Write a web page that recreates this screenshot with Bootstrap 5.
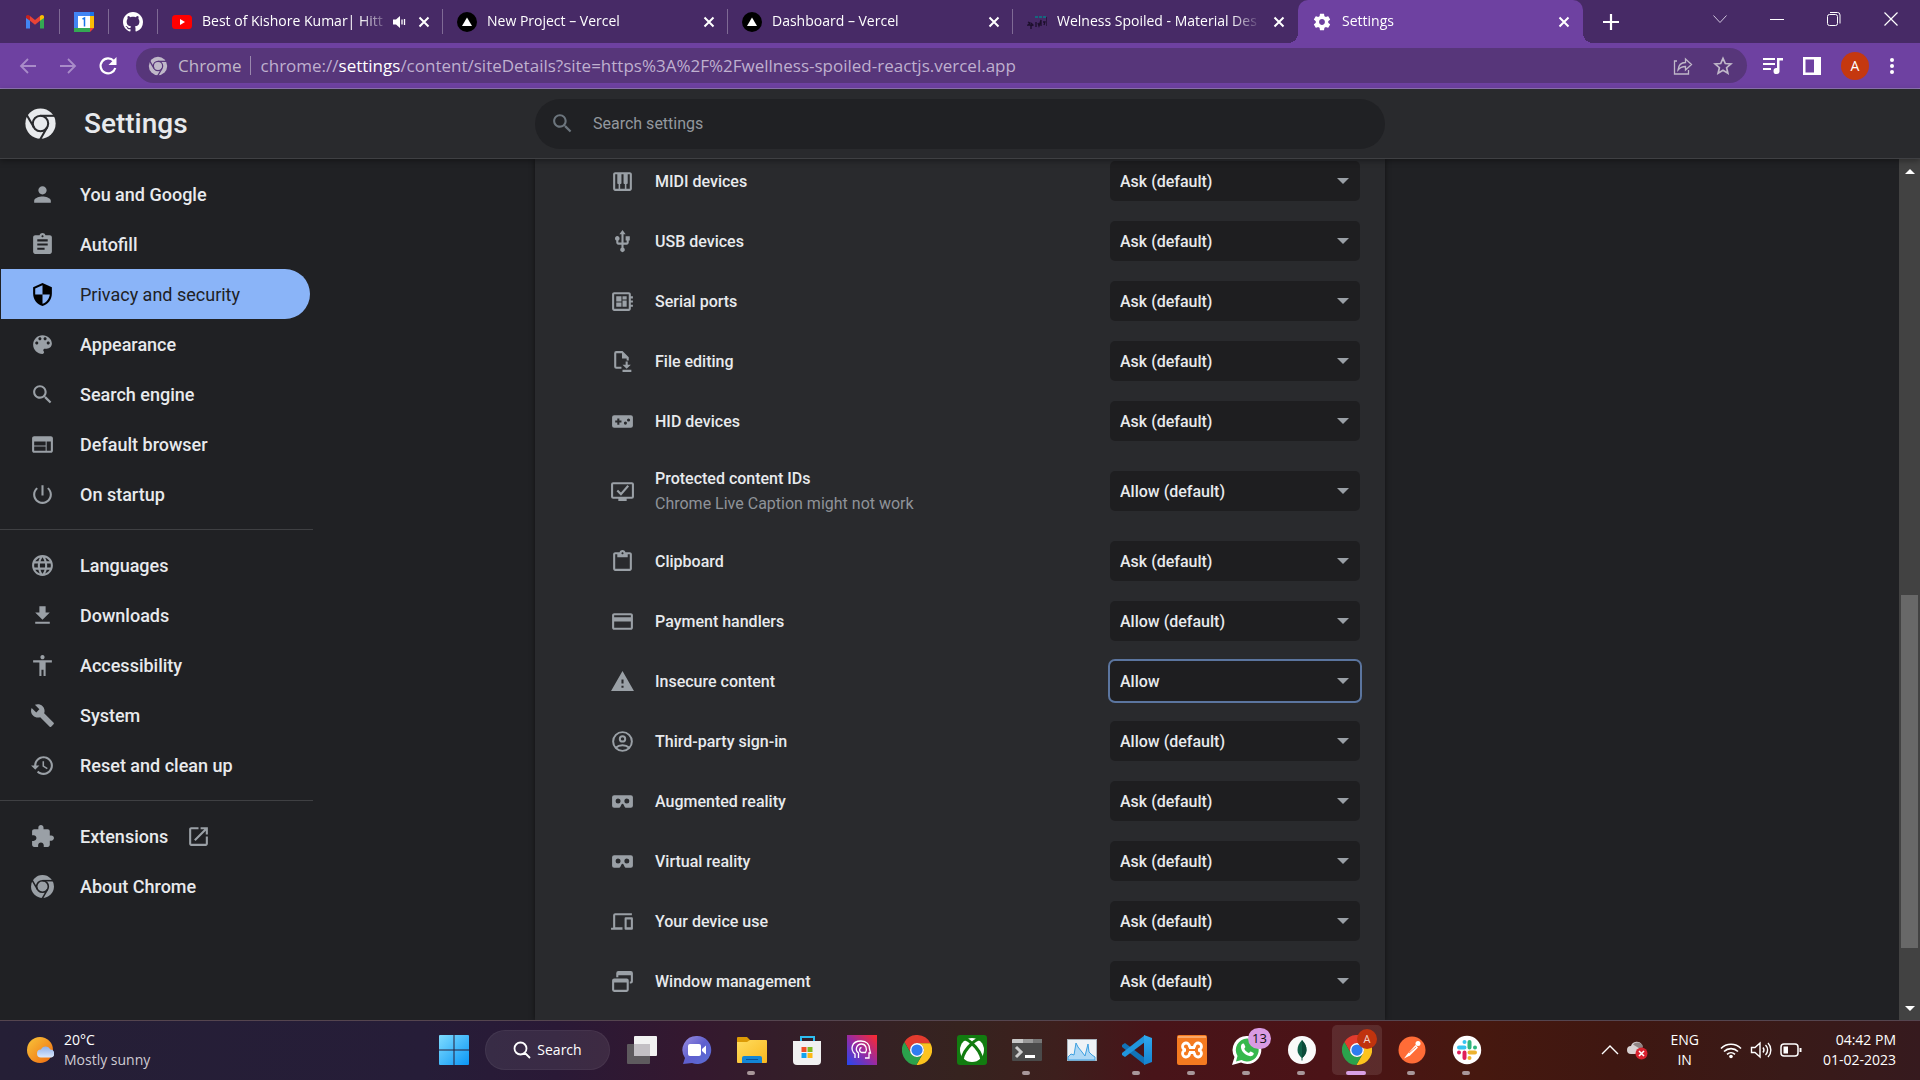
<!DOCTYPE html>
<html lang="en">
<head>
<meta charset="utf-8">
<meta name="viewport" content="width=device-width, initial-scale=1">
<title>Settings</title>
<link href="https://cdn.jsdelivr.net/npm/bootstrap@5.3.0/dist/css/bootstrap.min.css" rel="stylesheet">
<style>
  :root { --strip:#472a66; --bar:#6e41a1; --omni:#57367a; --page:#202124; --panel:#292a2d; --ink:#e8eaed; --dim:#9aa0a6; }
  body { font-family:Roboto,"Liberation Sans",sans-serif; background:var(--page); color:var(--ink); font-size:16px; }
  svg { display:block; flex:none; fill:currentColor; }
  .ui-font { font-family:"Open Sans","Noto Sans",sans-serif; }
  .btn { --bs-btn-padding-x:0; --bs-btn-padding-y:0; --bs-btn-border-width:0; --bs-btn-color:inherit; --bs-btn-hover-color:inherit; --bs-btn-active-color:inherit; }
  .i25 { width:25px; height:25px; }
  .i20 { width:20px; height:20px; }

  /* tab strip */
  .tab-strip { background:var(--strip); height:43px; padding-left:11px; color:#fff; font-size:14px; line-height:20px; }
  .tab-item { position:relative; flex:0 1 285px; padding-left:14px; height:43px; gap:10px; min-width:0; }
  .tab-item::after { content:""; width:1px; height:25px; background:#7f6a95; flex:none; }
  .tab-item.pinned { flex:0 0 49px; padding-left:14px; gap:14px; }
  .tab-title { color:#fff; flex:1 1 0; min-width:0; padding-bottom:2px; overflow:hidden; white-space:nowrap; text-decoration:none; -webkit-mask-image:linear-gradient(90deg,#000 calc(100% - 30px),transparent); mask-image:linear-gradient(90deg,#000 calc(100% - 30px),transparent); }
  .tab-item.audible .tab-title { margin-right:-8px; }
  .tab-item.active { background:var(--bar); border-radius:10px 10px 0 0; }
  .tab-item.active::after { background:none; }
  .tab-item.active::before { content:""; position:absolute; bottom:0; left:-10px; right:-10px; height:10px; background:radial-gradient(circle at 0 0,transparent 10px,var(--bar) 10px) left/10px 10px no-repeat,radial-gradient(circle at 100% 0,transparent 10px,var(--bar) 10px) right/10px 10px no-repeat; }
  .tab-item.before-active::after { background:none; }
  .window-btn { width:57px; }
  .window-group { padding:0 1px 6px 0; }

  /* toolbar */
  .tool-bar { background:var(--bar); height:46px; border-bottom:1px solid #9277b6; padding:0 15px; color:#fff; }
  .nav-arrow { width:40px; color:#a98cc9; }
  .nav-arrow.first { width:26px; margin-right:7px; }
  .omnibox { background:var(--omni); height:35px; border-radius:18px; color:#c0b8c9; padding:0 14px 0 12px; font-size:17px; line-height:24px; }
  .omni-label { margin:0 8px 0 10px; }
  .omni-sep { width:1px; height:19px; background:#9a88ad; margin-right:10px; }
  .url { color:#bfb0cf; white-space:nowrap; overflow:hidden; }
  .url b { color:#fff; font-weight:400; }
  .tool-gap { gap:20px; }
  .tool-end { padding-right:10px; }
  .avatar { width:28px; height:28px; background:#c5380f; border-radius:50%; font-size:14px; }

  /* settings header */
  .app-header { height:70px; background:var(--panel); border-bottom:1px solid #3f4043; position:relative; z-index:2; box-shadow:0 2px 6px rgba(0,0,0,.35); }
  .side-cell { flex:1 1 0; min-width:0; }
  .brand { gap:27px; }
  .app-title { font-size:28px; font-weight:500; line-height:32px; }
  .search-field { flex:0 1 850px; height:50px; border-radius:25px; background:var(--page); padding:0 15px; gap:18px; }
  .search-field input { background:none; border:0; outline:0; color:var(--ink); font-size:16px; padding:0; box-shadow:none; }
  .search-field input::placeholder { color:#93989e; }

  /* side menu */
  .side-menu { padding-top:10px; }
  .side-menu .nav-link { height:50px; width:310px; padding:0 0 0 30px; gap:25px; color:var(--ink); font-size:18px; font-weight:500; }
  .side-menu .nav-link svg { color:var(--dim); }
  .side-menu .nav-link.active { background:#8ab4f8; color:#202124; font-weight:400; border-radius:0 25px 25px 0; margin-left:1px; width:309px; padding-left:29px; }
  .side-menu .nav-link.active svg { color:#000; }
  .side-menu .trail { gap:18px; }
  .side-menu hr { width:313px; margin:10px 0; border-top:1px solid #3f4043; opacity:1; }

  /* permission list */
  .page-body { flex:1 1 0; min-height:0; }
  .panel-col { flex:0 1 850px; background:var(--panel); box-shadow:0 0 5px rgba(0,0,0,.5); }
  .perm-list { margin-top:-8px; }
  .perm-row { height:60px; padding:0 25px 0 75px; gap:20px; font-weight:500; }
  .perm-row.tall { height:80px; }
  .perm-row > svg { color:var(--dim); }
  .perm-row label { line-height:25px; }
  .perm-row .sub { display:block; font-weight:400; color:#8f9399; }
  .perm-row .form-select { width:250px; height:40px; background-color:#1e1e20; border:0; border-radius:5px; color:var(--ink); font-size:16px; font-weight:500; line-height:24px; padding:2px 30px 0 10px; background-size:12px 6px; background-position:right 11px center;
    background-image:url("data:image/svg+xml,%3csvg xmlns='http://www.w3.org/2000/svg' viewBox='0 0 12 6'%3e%3cpath fill='%239aa0a6' d='M0 0h12L6 6z'/%3e%3c/svg%3e"); }
  .perm-row .form-select.focused { box-shadow:0 0 0 2px #5b759f; }

  /* scroll bar */
  .scroll-track { width:21px; background:#424242; color:#fff; }
  .scroll-thumb { width:17px; background:#686868; flex:353 1 0; }

  /* task bar */
  .task-bar { height:60px; border-top:1px solid #55454f; padding-bottom:2px; color:#fff; font-size:14px; line-height:20px; background:linear-gradient(90deg,#251f36 0,#261d38 22%,#2a1936 29%,#34182f 36%,#341f28 42%,#36231f 50%,#3d1f1d 55%,#481419 60%,#4b1317 69%,#46180f 77%,#3f1711 84%,#391a18 93%,#361a1e 100%); }
  .task-slot { width:55px; height:57px; position:relative; }
  .task-slot.running::after { content:""; position:absolute; left:23px; bottom:3px; width:8px; height:4px; border-radius:2px; background:#a8979a; }
  .task-slot.current::after { left:17px; width:20px; background:#d9a0e4; }
  .task-slot.current .tile { background:rgba(255,255,255,.1); border-radius:5px; width:50px; height:50px; }
  .search-pill { width:125px; height:40px; border-radius:20px; background:rgba(255,255,255,.08); border:1px solid rgba(255,255,255,.05); margin:0 4px; gap:6px; font-size:14px; }
  .count-badge { position:absolute; top:7px; right:3px; width:23px; height:21px; border-radius:11px; background:#d99be3; color:#111; font-size:13px; }
  .user-badge { position:absolute; top:8px; right:7px; width:20px; height:20px; border-radius:50%; background:#c0330e; color:#f2d5cc; font-size:11px; }
  .weather { padding-left:24px; gap:10px; }
  .muted { color:#cfcbd3; }
  .tray { padding-right:24px; gap:21px; }
</style>
</head>
<body class="vh-100 d-flex flex-column overflow-hidden">

<svg width="0" height="0" class="position-absolute" aria-hidden="true">
  <defs>
    <mask id="ringMask"><rect width="24" height="24" fill="#000"/><circle cx="12" cy="12" r="11" fill="#fff"/><g stroke="#000" stroke-width="1.5" fill="none"><circle cx="12" cy="12" r="5.6"/><path d="M12 6.4h12"/><path d="M12 6.4h12" transform="rotate(120 12 12)"/><path d="M12 6.4h12" transform="rotate(240 12 12)"/></g></mask>
    <linearGradient id="winG" x1="0" y1="0" x2="1" y2="1"><stop offset="0" stop-color="#7fdcff"/><stop offset="1" stop-color="#0a96f5"/></linearGradient>
    <linearGradient id="sunG" x1="0" y1="0" x2="1" y2="1"><stop offset="0" stop-color="#f8c53a"/><stop offset="1" stop-color="#ef6a10"/></linearGradient>
    <linearGradient id="cloudG" x1="0" y1="0" x2="0" y2="1"><stop offset="0" stop-color="#8fb0ea"/><stop offset="1" stop-color="#dbe8fb"/></linearGradient>
    <linearGradient id="folderG" x1="0" y1="0" x2="1" y2="1"><stop offset="0" stop-color="#ffdc5e"/><stop offset="1" stop-color="#f9b81f"/></linearGradient>
    <linearGradient id="chatG" x1="0" y1="0" x2="1" y2="1"><stop offset="0" stop-color="#9c8fe0"/><stop offset=".5" stop-color="#5f5fce"/><stop offset="1" stop-color="#5a6fd6"/></linearGradient>
    <linearGradient id="headG" x1="0" y1="1" x2="1" y2="0"><stop offset="0" stop-color="#2348f0"/><stop offset=".5" stop-color="#9a2aa0"/><stop offset="1" stop-color="#ff2a2a"/></linearGradient>
    <linearGradient id="codeG" x1="0" y1="0" x2="0" y2="1"><stop offset="0" stop-color="#2fa9ef"/><stop offset="1" stop-color="#1583d0"/></linearGradient>
  </defs>
  <symbol id="chromeMono" viewBox="0 0 24 24"><rect width="24" height="24" mask="url(#ringMask)"/></symbol>
  <symbol id="chromeColor" viewBox="0 0 24 24"><path fill="#e33b2e" d="M1.9 5.5A12 12 0 0 1 22.67 6.5H12A5.5 5.5 0 0 0 7.24 14.75Z"/><path fill="#fcc31e" d="M22.67 6.5A12 12 0 0 1 11.43 24L16.76 14.75A5.5 5.5 0 0 0 12 6.5Z"/><path fill="#2ba24c" d="M11.43 24A12 12 0 0 1 1.9 5.5L7.24 14.75A5.5 5.5 0 0 0 16.76 14.75Z"/><circle cx="12" cy="12" r="5.6" fill="#fff"/><circle cx="12" cy="12" r="4.5" fill="#2f7cf0"/></symbol>
  <symbol id="closeX" viewBox="0 0 16 16"><path d="M3.5 3.5l9 9m0-9l-9 9" stroke="currentColor" stroke-width="2" fill="none"/></symbol>
  <symbol id="vercel" viewBox="0 0 20 20"><circle cx="10" cy="10" r="10" fill="#000"/><path fill="#fff" d="M10 5.500l5 8.500H5z"/></symbol>
  <symbol id="magnify" viewBox="0 0 24 24"><path d="M15.5 14h-.79l-.28-.27C15.41 12.59 16 11.11 16 9.5 16 5.91 13.09 3 9.5 3S3 5.91 3 9.5 5.910 16 9.500 16c1.610 0 3.090-.590 4.230-1.570l.27.28v.79l5 4.990L20.490 19l-4.990-5zm-6 0C7.010 14 5 11.990 5 9.500S7.010 5 9.500 5 14 7.010 14 9.500 11.990 14 9.500 14z"/></symbol>
  <symbol id="vr" viewBox="0 0 24 24"><path fill-rule="evenodd" d="M20 6H4a2 2 0 0 0-2 2v8a2 2 0 0 0 2 2h4.300c.8 0 1.500-.5 1.800-1.200l.9-2c.4-.9 1.600-.9 2 0l.9 2c.3.7 1 1.200 1.800 1.200H20a2 2 0 0 0 2-2V8a2 2 0 0 0-2-2zM7.800 14a2.400 2.400 0 1 1 0-4.800 2.400 2.400 0 0 1 0 4.800zm8.400 0a2.400 2.400 0 1 1 0-4.800 2.400 2.400 0 0 1 0 4.800z"/></symbol>
</svg>

<!-- tabs -->
<div class="tab-strip ui-font d-flex align-items-center flex-shrink-0">
  <div class="tab-item pinned d-flex align-items-center"><a href="#" aria-label="Gmail"><svg class="i20" viewBox="0 0 20 20"><path fill="#4285f4" d="M1 5v11.500h4V8z"/><path fill="#34a853" d="M19 5v11.500h-4V8z"/><path fill="#ea4335" d="M5 4l5 4 5-4v4.800l-5 4-5-4z"/><path fill="#c5221f" d="M1 5c0-2 2.200-2.600 4-1v4.800L1 6z"/><path fill="#fbbc04" d="M19 5c0-2-2.200-2.600-4-1v4.800L19 6z"/></svg></a></div>
  <div class="tab-item pinned d-flex align-items-center"><a href="#" aria-label="Calendar"><svg class="i20" viewBox="0 0 20 20"><path fill="#4285f4" d="M0 0h20v4H4v16H0z"/><path fill="#1a73e8" d="M16 0h4v4h-4z"/><path fill="#fbbc04" d="M16 4h4v12h-4z"/><path fill="#34a853" d="M0 16h16v4H0z"/><path fill="#ea4335" d="M16 16h4l-4 4z"/><path fill="#fff" d="M4 4h12v12H4z"/><path d="M8.500 7l2-1v8.500" fill="none" stroke="#1a73e8" stroke-width="1.500"/></svg></a></div>
  <div class="tab-item pinned d-flex align-items-center"><a href="#" class="text-white" aria-label="GitHub"><svg class="i20" viewBox="0 0 16 16"><path d="M8 0C3.580 0 0 3.580 0 8c0 3.540 2.290 6.530 5.470 7.590.4.07.55-.17.55-.38 0-.19-.01-.82-.01-1.490-2.010.37-2.530-.49-2.690-.94-.09-.23-.48-.94-.82-1.130-.28-.15-.68-.52-.01-.53.63-.01 1.080.58 1.230.82.72 1.210 1.870.87 2.330.66.07-.52.28-.87.51-1.070-1.780-.2-3.640-.89-3.640-3.950 0-.87.31-1.590.82-2.150-.08-.2-.36-1.020.08-2.120 0 0 .67-.21 2.200.82.64-.18 1.320-.27 2-.27s1.360.09 2 .27c1.530-1.040 2.200-.82 2.200-.82.44 1.100.16 1.920.08 2.120.51.56.82 1.270.82 2.150 0 3.070-1.870 3.750-3.650 3.950.29.25.54.73.54 1.480 0 1.070-.01 1.930-.01 2.200 0 .21.15.46.55.38A8.010 8.010 0 0 0 16 8c0-4.420-3.580-8-8-8z"/></svg></a></div>
  <div class="tab-item audible d-flex align-items-center"><svg class="i20" viewBox="0 0 20 20"><rect y="3" width="20" height="14" rx="3.500" fill="#f00"/><path fill="#fff" d="M8 7l5 3-5 3z"/></svg><a class="tab-title" href="#">Best of Kishore Kumar| Hitt</a><svg width="14" height="16" viewBox="0 0 14 16"><path d="M1 5.500h3L8 2v12l-4-3.500H1z"/><path d="M10 5.500v5M12.500 5v6" stroke="currentColor" stroke-width="1.300"/></svg><button class="btn" aria-label="Close tab"><svg width="16" height="16"><use href="#closeX"/></svg></button></div>
  <div class="tab-item d-flex align-items-center"><svg class="i20"><use href="#vercel"/></svg><a class="tab-title" href="#">New Project – Vercel</a><button class="btn" aria-label="Close tab"><svg width="16" height="16"><use href="#closeX"/></svg></button></div>
  <div class="tab-item d-flex align-items-center"><svg class="i20"><use href="#vercel"/></svg><a class="tab-title" href="#">Dashboard – Vercel</a><button class="btn" aria-label="Close tab"><svg width="16" height="16"><use href="#closeX"/></svg></button></div>
  <div class="tab-item before-active d-flex align-items-center"><svg class="i20" viewBox="0 0 20 20" fill="none"><path stroke="#17677f" stroke-width="2" d="M8 5h3m1 0h3m1 0h3"/><path stroke="#1d0f2c" stroke-width="1.300" fill="none" d="M1 10l2 1-2 2h3v4m0-6l2 2-2 1m5-4v5m2-4l1 3 2-6v6m2-4h2l-1 3m3-8v9"/></svg><a class="tab-title" href="#">Welness Spoiled - Material Des</a><button class="btn" aria-label="Close tab"><svg width="16" height="16"><use href="#closeX"/></svg></button></div>
  <div class="tab-item active d-flex align-items-center"><svg class="i20" viewBox="0 0 24 24"><path d="M19.430 12.980c.04-.32.07-.64.07-.98s-.03-.66-.07-.98l2.110-1.650c.19-.15.24-.42.12-.64l-2-3.460c-.12-.22-.39-.3-.61-.22l-2.490 1c-.52-.4-1.080-.73-1.690-.98l-.38-2.650C14.460 2.180 14.250 2 14 2h-4c-.25 0-.46.18-.49.42l-.38 2.650c-.61.25-1.170.59-1.690.98l-2.490-1c-.23-.09-.49 0-.61.22l-2 3.460c-.13.22-.07.49.12.64l2.110 1.650c-.04.32-.07.65-.07.98s.03.66.07.98l-2.110 1.650c-.19.15-.24.42-.12.64l2 3.460c.12.22.39.3.61.22l2.490-1c.52.4 1.080.73 1.690.98l.38 2.650c.03.24.24.42.49.42h4c.25 0 .46-.18.49-.42l.38-2.650c.61-.25 1.170-.59 1.690-.98l2.490 1c.23.09.49 0 .61-.22l2-3.460c.12-.22.07-.49-.12-.64l-2.110-1.650zM12 15.500c-1.930 0-3.500-1.570-3.500-3.500s1.570-3.500 3.500-3.500 3.500 1.570 3.500 3.500-1.570 3.500-3.500 3.500z"/></svg><a class="tab-title" href="#">Settings</a><button class="btn" aria-label="Close tab"><svg width="16" height="16"><use href="#closeX"/></svg></button></div>
  <button class="btn ms-3 ps-1" aria-label="New tab"><svg width="16" height="16" viewBox="0 0 16 16"><path d="M8 0v16M0 8h16" stroke="currentColor" stroke-width="2.200"/></svg></button>
  <div class="window-group ms-auto d-flex align-items-center">
    <button class="btn window-btn d-flex justify-content-center" aria-label="Search tabs"><svg width="14" height="16" viewBox="0 0 14 16"><path d="M.5 4.500l6.500 7 6.500-7" fill="none" stroke="#cfc3dc"/></svg></button>
    <button class="btn window-btn d-flex justify-content-center" aria-label="Minimize"><svg width="14" height="16" viewBox="0 0 14 16"><path d="M0 8.500h14" stroke="#fff"/></svg></button>
    <button class="btn window-btn d-flex justify-content-center" aria-label="Restore"><svg width="14" height="16" viewBox="0 0 14 16"><rect x=".5" y="3.500" width="10" height="11" rx="2" fill="none" stroke="#fff"/><path d="M3 1.500h7.500a2.500 2.500 0 0 1 2.500 2.500v8.500" fill="none" stroke="#fff"/></svg></button>
    <button class="btn window-btn d-flex justify-content-center" aria-label="Close"><svg width="14" height="16" viewBox="0 0 14 16"><path d="M.5 1.500l13 13m0-13l-13 13" stroke="#fff" stroke-width="1.200"/></svg></button>
  </div>
</div>

<!-- toolbar -->
<div class="tool-bar ui-font d-flex align-items-center flex-shrink-0">
  <button class="btn nav-arrow first d-flex justify-content-center" aria-label="Back"><svg class="i20" viewBox="0 0 20 20"><path d="M18 10H3m7-7l-7 7 7 7" fill="none" stroke="currentColor" stroke-width="1.800"/></svg></button>
  <button class="btn nav-arrow d-flex justify-content-center" aria-label="Forward"><svg class="i20" viewBox="0 0 20 20"><path d="M2 10h15m-7-7l7 7-7 7" fill="none" stroke="currentColor" stroke-width="1.800"/></svg></button>
  <button class="btn nav-arrow text-white d-flex justify-content-center" aria-label="Reload"><svg class="i20" viewBox="0 0 20 20"><path d="M15.800 5A7.500 7.500 0 1 0 17.300 12" fill="none" stroke="currentColor" stroke-width="2.200"/><path d="M18.500 1v8h-8z"/></svg></button>
  <div class="omnibox d-flex align-items-center flex-grow-1 ms-2 me-3">
    <svg class="i20"><use href="#chromeMono"/></svg><span class="omni-label">Chrome</span><span class="omni-sep"></span>
    <span class="url flex-grow-1">chrome://<b>settings</b>/content/siteDetails?site=https%3A%2F%2Fwellness-spoiled-reactjs.vercel.app</span>
    <div class="d-flex tool-gap">
      <button class="btn" aria-label="Share"><svg class="i20" viewBox="0 0 20 20"><path d="M4 5H1.500v13h14v-4M5 14c.5-5 3-7.500 7.500-7.500V3l6 5.500-6 5.500v-3.500C9 10.500 7 11.500 5 14z" fill="none" stroke="currentColor" stroke-width="1.300"/></svg></button>
      <button class="btn" aria-label="Bookmark"><svg class="i20" viewBox="0 0 20 20"><path d="M10 2.300l2.300 5.200 5.600.5-4.300 3.700 1.300 5.500L10 14.300l-4.900 2.900 1.300-5.500L2.100 8l5.600-.5z" fill="none" stroke="currentColor" stroke-width="1.700"/></svg></button>
    </div>
  </div>
  <div class="tool-gap tool-end d-flex align-items-center">
    <button class="btn" aria-label="Media"><svg class="i20" viewBox="0 0 20 20"><path d="M0 2h12v2H0zm0 5h12v2H0zm0 5h8v2H0zM14 2h6v2.500h-3.500v10A3 3 0 1 1 14 12z"/></svg></button>
    <button class="btn" aria-label="Side panel"><svg width="18" height="18" viewBox="0 0 18 18"><path fill-rule="evenodd" d="M0 0h18v18H0zm2.500 2.500v13H11v-13z"/></svg></button>
    <button class="btn avatar d-flex align-items-center justify-content-center" aria-label="Profile">A</button>
    <button class="btn" aria-label="Menu"><svg width="6" height="18" viewBox="0 0 6 18"><circle cx="3" cy="3" r="2"/><circle cx="3" cy="9" r="2"/><circle cx="3" cy="15" r="2"/></svg></button>
  </div>
</div>

<!-- settings header -->
<header class="app-header d-flex align-items-center flex-shrink-0">
  <div class="side-cell brand d-flex align-items-center ps-4"><svg width="33" height="33"><use href="#chromeMono"/></svg><h1 class="app-title mb-0">Settings</h1></div>
  <div class="search-field d-flex align-items-center"><svg class="i25 text-secondary"><use href="#magnify"/></svg><input class="flex-grow-1" type="search" placeholder="Search settings" aria-label="Search settings"></div>
  <div class="side-cell pe-4"></div>
</header>

<div class="page-body d-flex overflow-hidden">
  <nav class="side-cell side-menu nav flex-column flex-nowrap">
    <a class="nav-link d-flex align-items-center" href="#"><svg class="i25" viewBox="0 0 24 24"><path d="M12 12c2.210 0 4-1.790 4-4s-1.790-4-4-4-4 1.790-4 4 1.790 4 4 4zm0 2c-2.670 0-8 1.340-8 4v2h16v-2c0-2.660-5.330-4-8-4z"/></svg>You and Google</a>
    <a class="nav-link d-flex align-items-center" href="#"><svg class="i25" viewBox="0 0 24 24"><path d="M19 3h-4.180C14.400 1.840 13.300 1 12 1c-1.300 0-2.400.84-2.820 2H5c-1.100 0-2 .9-2 2v14c0 1.100.9 2 2 2h14c1.100 0 2-.9 2-2V5c0-1.100-.9-2-2-2zm-7 0c.55 0 1 .45 1 1s-.45 1-1 1-1-.45-1-1 .45-1 1-1zm2 14H7v-2h7v2zm3-4H7v-2h10v2zm0-4H7V7h10v2z"/></svg>Autofill</a>
    <a class="nav-link active d-flex align-items-center" aria-current="page" href="#"><svg class="i25" viewBox="0 0 24 24"><path d="M12 1L3 5v6c0 5.550 3.840 10.740 9 12 5.160-1.260 9-6.450 9-12V5l-9-4zm0 10.990h7c-.53 4.120-3.280 7.790-7 8.940V12H5V6.300l7-3.110v8.800z"/></svg>Privacy and security</a>
    <a class="nav-link d-flex align-items-center" href="#"><svg class="i25" viewBox="0 0 24 24"><path d="M12 3c-4.970 0-9 4.030-9 9s4.030 9 9 9c.83 0 1.500-.67 1.500-1.500 0-.39-.15-.74-.39-1.010-.23-.26-.38-.61-.38-.99 0-.83.67-1.500 1.500-1.500H16c2.760 0 5-2.240 5-5 0-4.420-4.030-8-9-8zm-5.500 9c-.83 0-1.500-.67-1.500-1.500S5.670 9 6.500 9 8 9.670 8 10.500 7.330 12 6.500 12zm3-4C8.670 8 8 7.330 8 6.500S8.670 5 9.500 5s1.500.67 1.500 1.500S10.330 8 9.500 8zm5 0c-.83 0-1.500-.67-1.500-1.500S13.670 5 14.500 5s1.500.67 1.500 1.500S15.330 8 14.500 8zm3 4c-.83 0-1.500-.67-1.500-1.500S16.670 9 17.500 9s1.500.67 1.500 1.500-.67 1.500-1.500 1.500z"/></svg>Appearance</a>
    <a class="nav-link d-flex align-items-center" href="#"><svg class="i25"><use href="#magnify"/></svg>Search engine</a>
    <a class="nav-link d-flex align-items-center" href="#"><svg class="i25" viewBox="0 0 24 24"><path d="M20 4H4c-1.100 0-1.990.9-1.990 2L2 18c0 1.100.9 2 2 2h16c1.100 0 2-.9 2-2V6c0-1.100-.9-2-2-2zm-5 14H4v-4h11v4zm0-5H4V9h11v4zm5 5h-4V9h4v9z"/></svg>Default browser</a>
    <a class="nav-link d-flex align-items-center" href="#"><svg class="i25" viewBox="0 0 24 24"><path d="M13 3h-2v10h2V3zm4.830 2.170l-1.420 1.420C17.990 7.860 19 9.810 19 12c0 3.870-3.130 7-7 7s-7-3.130-7-7c0-2.190 1.010-4.140 2.580-5.420L6.170 5.170C4.230 6.820 3 9.260 3 12c0 4.970 4.030 9 9 9s9-4.030 9-9c0-2.740-1.230-5.180-3.170-6.830z"/></svg>On startup</a>
    <hr>
    <a class="nav-link d-flex align-items-center" href="#"><svg class="i25" viewBox="0 0 24 24"><path d="M11.990 2C6.470 2 2 6.480 2 12s4.470 10 9.990 10C17.520 22 22 17.520 22 12S17.520 2 11.990 2zm6.930 6h-2.950c-.32-1.250-.78-2.450-1.380-3.560 1.840.63 3.370 1.910 4.330 3.560zM12 4.040c.83 1.200 1.480 2.530 1.910 3.960h-3.820c.43-1.430 1.080-2.760 1.910-3.960zM4.260 14C4.100 13.360 4 12.690 4 12s.1-1.360.26-2h3.380c-.08.66-.14 1.320-.14 2 0 .68.06 1.340.14 2H4.260zm.82 2h2.950c.32 1.250.78 2.450 1.380 3.560-1.840-.63-3.370-1.900-4.330-3.560zm2.950-8H5.080c.96-1.660 2.490-2.930 4.330-3.560C8.810 5.550 8.350 6.750 8.030 8zM12 19.960c-.83-1.200-1.480-2.530-1.910-3.960h3.820c-.43 1.430-1.080 2.760-1.910 3.960zM14.340 14H9.660c-.09-.66-.16-1.320-.16-2 0-.68.07-1.350.16-2h4.680c.09.65.16 1.320.16 2 0 .68-.07 1.340-.16 2zm.25 5.560c.6-1.110 1.060-2.310 1.380-3.560h2.950c-.96 1.650-2.490 2.930-4.330 3.560zM16.360 14c.08-.66.14-1.320.14-2 0-.68-.06-1.340-.14-2h3.380c.16.64.26 1.310.26 2s-.1 1.360-.26 2h-3.380z"/></svg>Languages</a>
    <a class="nav-link d-flex align-items-center" href="#"><svg class="i25" viewBox="0 0 24 24"><path d="M19 9h-4V3H9v6H5l7 7 7-7zM5 18v2h14v-2H5z"/></svg>Downloads</a>
    <a class="nav-link d-flex align-items-center" href="#"><svg class="i25" viewBox="0 0 24 24"><path d="M12 2c1.100 0 2 .9 2 2s-.9 2-2 2-2-.9-2-2 .9-2 2-2zm9 7h-6v13h-2v-6h-2v6H9V9H3V7h18v2z"/></svg>Accessibility</a>
    <a class="nav-link d-flex align-items-center" href="#"><svg class="i25" viewBox="0 0 24 24"><path d="M22.700 19l-9.100-9.100c.9-2.300.4-5-1.500-6.900-2-2-5-2.400-7.400-1.300L9 6 6 9 1.600 4.700C.4 7.100.9 10.100 2.900 12.100c1.900 1.900 4.600 2.400 6.900 1.500l9.100 9.100c.4.4 1 .4 1.400 0l2.300-2.300c.5-.4.5-1.100.1-1.400z"/></svg>System</a>
    <a class="nav-link d-flex align-items-center" href="#"><svg class="i25" viewBox="0 0 24 24"><path d="M13 3c-4.970 0-9 4.030-9 9H1l3.890 3.890.07.14L9 12H6c0-3.870 3.130-7 7-7s7 3.130 7 7-3.130 7-7 7c-1.930 0-3.680-.79-4.940-2.060l-1.420 1.420C8.270 19.990 10.510 21 13 21c4.970 0 9-4.030 9-9s-4.030-9-9-9zm-1 5v5l4.280 2.540.72-1.210-3.500-2.080V8H12z"/></svg>Reset and clean up</a>
    <hr>
    <a class="nav-link d-flex align-items-center" href="#"><svg class="i25" viewBox="0 0 24 24"><path d="M20.500 11H19V7c0-1.100-.9-2-2-2h-4V3.500C13 2.120 11.880 1 10.500 1S8 2.120 8 3.500V5H4c-1.100 0-1.990.9-1.990 2v3.800H3.500c1.490 0 2.700 1.210 2.700 2.700s-1.210 2.700-2.700 2.700H2V20c0 1.100.9 2 2 2h3.800v-1.500c0-1.490 1.210-2.700 2.700-2.700 1.490 0 2.700 1.210 2.700 2.700V22H17c1.100 0 2-.9 2-2v-4h1.500c1.380 0 2.500-1.120 2.500-2.500S21.880 11 20.500 11z"/></svg><span class="trail d-flex align-items-center">Extensions<svg class="i25" viewBox="0 0 24 24"><path d="M19 19H5V5h7V3H5c-1.110 0-2 .9-2 2v14c0 1.100.89 2 2 2h14c1.100 0 2-.9 2-2v-7h-2v7zM14 3v2h3.590l-9.830 9.830 1.410 1.410L19 6.410V10h2V3h-7z"/></svg></span></a>
    <a class="nav-link d-flex align-items-center" href="#"><svg class="i25"><use href="#chromeMono"/></svg>About Chrome</a>
  </nav>

  <main class="panel-col">
    <div class="perm-list">
      <div class="perm-row d-flex align-items-center"><svg class="i25" viewBox="0 0 24 24"><path d="M19 3H5c-1.100 0-2 .9-2 2v14c0 1.100.9 2 2 2h14c1.100 0 2-.9 2-2V5c0-1.100-.9-2-2-2zm-5 11.500h.25V19h-4.500v-4.500H10c.55 0 1-.45 1-1V5h2v8.500c0 .55.45 1 1 1zM5 5h2v8.500c0 .55.45 1 1 1h.25V19H5V5zm14 14h-3.250v-4.500H16c.55 0 1-.45 1-1V5h2v14z"/></svg><label class="flex-grow-1" for="p1">MIDI devices</label><select class="form-select" id="p1"><option>Ask (default)</option><option>Allow</option><option>Block</option></select></div>
      <div class="perm-row d-flex align-items-center"><svg class="i25" viewBox="0 0 24 24"><path d="M15 7v4h1v2h-3V5h2l-3-4-3 4h2v8H8v-2.070c.7-.37 1.200-1.080 1.200-1.930 0-1.210-.99-2.200-2.200-2.200-1.210 0-2.200.99-2.200 2.200 0 .85.5 1.560 1.200 1.930V13c0 1.110.89 2 2 2h3v3.050c-.71.37-1.200 1.100-1.200 1.950 0 1.220.99 2.200 2.200 2.200 1.210 0 2.200-.98 2.200-2.200 0-.85-.49-1.580-1.200-1.950V15h3c1.110 0 2-.89 2-2v-2h1V7h-4z"/></svg><label class="flex-grow-1" for="p2">USB devices</label><select class="form-select" id="p2"><option>Ask (default)</option><option>Block</option></select></div>
      <div class="perm-row d-flex align-items-center"><svg class="i25" viewBox="0 0 24 24"><path d="M22 9V7h-2V5c0-1.100-.9-2-2-2H4c-1.100 0-2 .9-2 2v14c0 1.100.9 2 2 2h14c1.100 0 2-.9 2-2v-2h2v-2h-2v-2h2v-2h-2V9h2zm-4 10H4V5h14v14zM6 13h5v4H6zm6-6h4v3h-4zM6 7h5v5H6zm6 4h4v6h-4z"/></svg><label class="flex-grow-1" for="p3">Serial ports</label><select class="form-select" id="p3"><option>Ask (default)</option><option>Block</option></select></div>
      <div class="perm-row d-flex align-items-center"><svg class="i25" viewBox="0 0 24 24"><path d="M12 2H6a2 2 0 0 0-2 2v13a2 2 0 0 0 2 2h5v-2H6V4h5.500v5H16v2h2V8z"/><path d="M15 12h2v3h3l-4 4-4-4h3zM12 20h8.500v2H12z"/></svg><label class="flex-grow-1" for="p4">File editing</label><select class="form-select" id="p4"><option>Ask (default)</option><option>Block</option></select></div>
      <div class="perm-row d-flex align-items-center"><svg class="i25" viewBox="0 0 24 24"><path fill-rule="evenodd" d="M20 6H4a2 2 0 0 0-2 2v8a2 2 0 0 0 2 2h16a2 2 0 0 0 2-2V8a2 2 0 0 0-2-2zM11 13H9v2H7v-2H5v-2h2V9h2v2h2zm3.800 2a1.500 1.500 0 1 1 0-3 1.500 1.500 0 0 1 0 3zm3-3a1.500 1.500 0 1 1 0-3 1.500 1.500 0 0 1 0 3z"/></svg><label class="flex-grow-1" for="p5">HID devices</label><select class="form-select" id="p5"><option>Ask (default)</option><option>Block</option></select></div>
      <div class="perm-row tall d-flex align-items-center"><svg class="i25" viewBox="0 0 24 24"><path fill-rule="evenodd" d="M21 3H3a2 2 0 0 0-2 2v12a2 2 0 0 0 2 2h5v2h8v-2h5a2 2 0 0 0 2-2V5a2 2 0 0 0-2-2zm0 14H3V5h18z"/><path d="M7 11l3.500 3.500 7-8" fill="none" stroke="currentColor" stroke-width="2"/></svg><label class="flex-grow-1" for="p6">Protected content IDs<span class="sub">Chrome Live Caption might not work</span></label><select class="form-select" id="p6"><option>Allow (default)</option><option>Block</option></select></div>
      <div class="perm-row d-flex align-items-center"><svg class="i25" viewBox="0 0 24 24"><path d="M19 3h-4.180C14.400 1.840 13.300 1 12 1c-1.300 0-2.400.84-2.820 2H5c-1.100 0-2 .9-2 2v14c0 1.100.9 2 2 2h14c1.100 0 2-.9 2-2V5c0-1.100-.9-2-2-2zm-7 0c.55 0 1 .45 1 1s-.45 1-1 1-1-.45-1-1 .45-1 1-1zm7 16H5V5h2v3h10V5h2v14z"/></svg><label class="flex-grow-1" for="p7">Clipboard</label><select class="form-select" id="p7"><option>Ask (default)</option><option>Block</option></select></div>
      <div class="perm-row d-flex align-items-center"><svg class="i25" viewBox="0 0 24 24"><path d="M20 4H4c-1.110 0-1.990.89-1.990 2L2 18c0 1.110.89 2 2 2h16c1.110 0 2-.89 2-2V6c0-1.110-.89-2-2-2zm0 14H4v-6h16v6zm0-10H4V6h16v2z"/></svg><label class="flex-grow-1" for="p8">Payment handlers</label><select class="form-select" id="p8"><option>Allow (default)</option><option>Block</option></select></div>
      <div class="perm-row d-flex align-items-center"><svg class="i25" viewBox="0 0 24 24"><path d="M1 21h22L12 2 1 21zm12-3h-2v-2h2v2zm0-4h-2v-4h2v4z"/></svg><label class="flex-grow-1" for="p9">Insecure content</label><select class="form-select focused" id="p9"><option>Allow</option><option>Block (default)</option></select></div>
      <div class="perm-row d-flex align-items-center"><svg class="i25" viewBox="0 0 24 24"><g fill="none" stroke="currentColor" stroke-width="1.900"><circle cx="12" cy="12" r="9"/><circle cx="12" cy="9.500" r="2.600"/><path d="M5.500 18c3.500-3.300 9.500-3.300 13 0"/></g></svg><label class="flex-grow-1" for="p10">Third-party sign-in</label><select class="form-select" id="p10"><option>Allow (default)</option><option>Block</option></select></div>
      <div class="perm-row d-flex align-items-center"><svg class="i25"><use href="#vr"/></svg><label class="flex-grow-1" for="p11">Augmented reality</label><select class="form-select" id="p11"><option>Ask (default)</option><option>Block</option></select></div>
      <div class="perm-row d-flex align-items-center"><svg class="i25"><use href="#vr"/></svg><label class="flex-grow-1" for="p12">Virtual reality</label><select class="form-select" id="p12"><option>Ask (default)</option><option>Block</option></select></div>
      <div class="perm-row d-flex align-items-center"><svg class="i25" viewBox="0 0 24 24"><path fill-rule="evenodd" d="M5 6h16V4H5a2 2 0 0 0-2 2v12H1v2h11v-2.500H5zM21 8h-6a1 1 0 0 0-1 1v10a1 1 0 0 0 1 1h6a1 1 0 0 0 1-1V9a1 1 0 0 0-1-1zm-1 9.500h-4V10h4z"/></svg><label class="flex-grow-1" for="p13">Your device use</label><select class="form-select" id="p13"><option>Ask (default)</option><option>Block</option></select></div>
      <div class="perm-row d-flex align-items-center"><svg class="i25" viewBox="0 0 24 24"><path fill-rule="evenodd" d="M20 2H8a2 2 0 0 0-2 2v4h2V6h12v6h-1v2h1a2 2 0 0 0 2-2V4a2 2 0 0 0-2-2zM16 9H4a2 2 0 0 0-2 2v9a2 2 0 0 0 2 2h12a2 2 0 0 0 2-2v-9a2 2 0 0 0-2-2zm0 11H4v-7h12z"/></svg><label class="flex-grow-1" for="p14">Window management</label><select class="form-select" id="p14"><option>Ask (default)</option><option>Block</option></select></div>
    </div>
  </main>

  <div class="side-cell d-flex justify-content-end">
    <div class="scroll-track d-flex flex-column align-items-center" aria-hidden="true">
      <svg width="10" height="24" viewBox="0 0 10 24"><path d="M0 15l5-5 5 5z"/></svg>
      <div style="flex:412 1 0"></div><div class="scroll-thumb"></div><div style="flex:48 1 0"></div>
      <svg width="10" height="24" viewBox="0 0 10 24"><path d="M0 10l5 5 5-5z"/></svg>
    </div>
  </div>
</div>

<!-- task bar -->
<footer class="task-bar ui-font d-flex align-items-center flex-shrink-0">
  <div class="side-cell weather d-flex align-items-center">
    <svg width="30" height="30" viewBox="0 0 30 30"><circle cx="16" cy="15" r="13" fill="url(#sunG)"/><path fill="url(#cloudG)" d="M17 22.500a4 4 0 0 1 0-8 5 5 0 0 1 9.200 0 4.100 4.100 0 0 1 1.300 8z"/></svg>
    <div>20°C<div class="muted">Mostly sunny</div></div>
  </div>
  <div class="d-flex align-items-center">
    <button class="btn task-slot d-flex align-items-center justify-content-center" aria-label="Start"><svg width="30" height="30" viewBox="0 0 30 30"><path fill="url(#winG)" d="M1 0h13.500v14.500H0V1a1 1 0 0 1 1-1zm14.500 0H29a1 1 0 0 1 1 1v13.500H15.500zM0 15.500h14.500V30H1a1 1 0 0 1-1-1zm15.500 0H30V29a1 1 0 0 1-1 1H15.500z"/></svg></button>
    <button class="btn search-pill text-white d-flex align-items-center justify-content-center"><svg width="18" height="18" viewBox="0 0 18 18"><path d="M12 12l5 5M13.500 7.500a6 6 0 1 1-12 0 6 6 0 0 1 12 0z" fill="none" stroke="#fff" stroke-width="1.800"/></svg>Search</button>
    <button class="btn task-slot d-flex align-items-center justify-content-center" aria-label="Task view"><svg width="30" height="30" viewBox="0 0 30 30"><rect y="9" width="23" height="20" rx="1" fill="#5e5a5e"/><rect x="7" y="1" width="23" height="20" rx="1" fill="#f2f2f2"/><path fill="#c3bfc4" d="M7 9h16v12H7z"/></svg></button>
    <button class="btn task-slot d-flex align-items-center justify-content-center" aria-label="Chat"><svg width="30" height="30" viewBox="0 0 30 30"><path fill="url(#chatG)" d="M15 1a14 14 0 1 1-5 27L1 29l2-6A14 14 0 0 1 15 1z"/><path fill="#fff" d="M8 9h9a2 2 0 0 1 2 2v8a2 2 0 0 1-2 2H8a2 2 0 0 1-2-2v-8a2 2 0 0 1 2-2zm12 5l4-3.500v9L20 16z"/></svg></button>
    <button class="btn task-slot running d-flex align-items-center justify-content-center" aria-label="File Explorer"><svg width="30" height="30" viewBox="0 0 30 30"><path fill="#dc9a06" d="M0 3a1 1 0 0 1 1-1h9l3 3v5H0z"/><path fill="url(#folderG)" d="M0 7h10l3-2h16a1 1 0 0 1 1 1v21a1 1 0 0 1-1 1H1a1 1 0 0 1-1-1z"/><path fill="#1386d6" d="M5 28v-5a2 2 0 0 1 2-2h16a2 2 0 0 1 2 2v5z"/><path d="M9 24.500h12" stroke="#08529a"/></svg></button>
    <button class="btn task-slot d-flex align-items-center justify-content-center" aria-label="Store"><svg width="30" height="30" viewBox="0 0 30 30"><path fill="#f1f1f1" d="M1 6h28v20a4 4 0 0 1-4 4H5a4 4 0 0 1-4-4z"/><path d="M9 6V2h13v4" fill="none" stroke="#2dbdf0" stroke-width="2"/><path fill="#f04f24" d="M9.500 12h5v5h-5z"/><path fill="#80b921" d="M15.500 12h5v5h-5z"/><path fill="#12a4ee" d="M9.500 18h5v5h-5z"/><path fill="#fdb813" d="M15.500 18h5v5h-5z"/></svg></button>
    <button class="btn task-slot d-flex align-items-center justify-content-center" aria-label="Head app"><svg width="30" height="30" viewBox="0 0 30 30"><rect width="30" height="30" fill="url(#headG)"/><path d="M8 23v-4C3 15 4 6 14 6c6 0 8.500 4 8.500 8l1 4H22v5h-4M11.500 23v-5c-4-3-2-9 3-9 4.500 0 6 5 4 8.500h-4c-3-1-2-5 0-5" fill="none" stroke="#fff" stroke-width="1.300"/></svg></button>
    <button class="btn task-slot d-flex align-items-center justify-content-center" aria-label="Chrome"><svg width="30" height="30"><use href="#chromeColor"/></svg></button>
    <button class="btn task-slot d-flex align-items-center justify-content-center" aria-label="Xbox"><svg width="30" height="30" viewBox="0 0 30 30"><rect width="30" height="30" rx="3" fill="#127c10"/><circle cx="15" cy="15" r="12" fill="#fff"/><path d="M5 25C6 18 11 12 15 8.500 19 12 24 18 25 25M7 4c3 0 6 2.500 8 4.500C17 6.500 20 4 23 4" fill="none" stroke="#127c10" stroke-width="3"/></svg></button>
    <button class="btn task-slot running d-flex align-items-center justify-content-center" aria-label="Terminal"><svg width="30" height="30" viewBox="0 0 30 30"><rect y="4" width="30" height="22" rx="1" fill="#4a4a4a"/><path fill="#c8c8c8" d="M0 5a1 1 0 0 1 1-1h10v4H0z"/><path fill="#999" d="M11 4h10v4H11z"/><path fill="#777" d="M21 4h9v4h-9z"/><path d="M4 12l5 5-5 5" fill="none" stroke="#ccc" stroke-width="3"/><path fill="#fff" d="M13 20h10v3H13z"/></svg></button>
    <button class="btn task-slot d-flex align-items-center justify-content-center" aria-label="Monitor"><svg width="30" height="30" viewBox="0 0 30 30"><rect x=".5" y="4.500" width="29" height="21" fill="#eef2f6" stroke="#aab4bc"/><path fill="#aed8f5" stroke="#3c9fe0" d="M1 22l3-3 3 1 2-12 2 4 4 5 3 4 3-12 1 8 3 3 3 2v3H1z"/></svg></button>
    <button class="btn task-slot running d-flex align-items-center justify-content-center" aria-label="VS Code"><svg width="30" height="30" viewBox="0 0 30 30"><path fill="#1173b8" d="M0 10l3-2 20 15v7L0 12z"/><path fill="#2196dd" d="M0 20l3 2L23 7V0L0 18z"/><path fill="url(#codeG)" d="M22 0l8 3v24l-8 3z"/></svg></button>
    <button class="btn task-slot running d-flex align-items-center justify-content-center" aria-label="XAMPP"><svg width="30" height="30" viewBox="0 0 30 30"><rect width="30" height="30" rx="2" fill="#f47a20"/><path d="M1 1h28v2H1z" fill="#f9a768"/><path d="M12.500 12.500v-1.500a3.500 3.500 0 1 0-3.500 4 3.500 3.500 0 1 0 3.500 4v-1.500M17.500 12.500v-1.500a3.500 3.500 0 1 1 3.500 4 3.500 3.500 0 1 1-3.500 4v-1.500M12 12.500h6M12 17.500h6" fill="none" stroke="#fff" stroke-width="2.800"/></svg></button>
    <button class="btn task-slot running d-flex align-items-center justify-content-center" aria-label="WhatsApp"><svg width="30" height="30" viewBox="0 0 30 30"><path fill="#fff" d="M15 1a14 14 0 1 1-6 26.500L0 30l2.500-8A14 14 0 0 1 15 1z"/><path fill="#36b84c" d="M15 3.500A11.500 11.500 0 1 1 9.500 25L4 26.500 5.500 21A11.500 11.500 0 0 1 15 3.500z"/><path fill="#fff" d="M10 9c1-1 2-.5 2.500.8l.8 1.900c.2.700-.8 1.500-1 2 .8 2 2.500 3.400 4.500 4.300.7-.3 1.300-1.700 2-1.500l2.400 1.200c1 .5.500 2-.5 2.700-2.400 1.700-6 .2-8.300-1.800C9.800 16 7.500 11.800 10 9z"/></svg><span class="count-badge d-flex align-items-center justify-content-center">13</span></button>
    <button class="btn task-slot running d-flex align-items-center justify-content-center" aria-label="MongoDB"><svg width="30" height="30" viewBox="0 0 30 30"><circle cx="15" cy="15" r="14" fill="#fafafa"/><path fill="#116149" d="M15 5c3 3.500 4.500 6 4.500 10 0 3.500-2 6-4.500 8-2.500-2-4.500-4.500-4.500-8C10.500 11 12 8.500 15 5z"/><path fill="#0b4a39" d="M15 5c3 3.500 4.500 6 4.500 10 0 3.500-2 6-4.500 8z"/><path stroke="#116149" d="M15 22v3.500"/></svg></button>
    <button class="btn task-slot running current d-flex align-items-center justify-content-center" aria-label="Chrome window"><span class="tile d-flex align-items-center justify-content-center"><svg width="30" height="30"><use href="#chromeColor"/></svg></span><span class="user-badge d-flex align-items-center justify-content-center">A</span></button>
    <button class="btn task-slot running d-flex align-items-center justify-content-center" aria-label="Postman"><svg width="30" height="30" viewBox="0 0 30 30"><circle cx="15" cy="15" r="13.500" fill="#ff6c37"/><circle cx="21" cy="8.500" r="2.500" fill="#fff"/><path fill="#fff" d="M18.500 10l2.500 2.500-8 8-6 3 3-4z"/><path d="M12 18l7-6" stroke="#ff6c37" stroke-width=".8"/></svg></button>
    <button class="btn task-slot running d-flex align-items-center justify-content-center" aria-label="Slack"><svg width="30" height="30" viewBox="0 0 30 30"><circle cx="15" cy="15" r="14.200" fill="#fff"/><g stroke-width="4" stroke-linecap="round"><path stroke="#36c5f0" d="M7 12.500h5.500M12.500 7h0"/><path stroke="#2eb67d" d="M17.500 7v5.500M23 12.500h0"/><path stroke="#ecb22e" d="M17.500 17.500H23M17.500 23h0"/><path stroke="#e01e5a" d="M12.500 17.500V23M7 17.500h0"/></g></svg></button>
  </div>
  <div class="side-cell tray d-flex align-items-center justify-content-end">
    <div class="d-flex align-items-center gap-2">
      <svg width="18" height="16" viewBox="0 0 18 16"><path d="M1 12l8-8 8 8" fill="none" stroke="#fff" stroke-width="1.400"/></svg>
      <svg width="22" height="20" viewBox="0 0 22 20"><path fill="#d8d2d2" d="M4 14a4 4 0 0 1 0-8 6 6 0 0 1 11-1v9z"/><path fill="#8f8584" d="M6 4.500A6 6 0 0 1 16 6l-1 4z"/><circle cx="14.500" cy="13.500" r="6" fill="#d8232f"/><path d="M12 11l5 5m0-5l-5 5" stroke="#fff" stroke-width="1.600"/></svg>
    </div>
    <div class="text-center">ENG<br>IN</div>
    <button class="btn text-white d-flex align-items-center gap-2" aria-label="Network, volume and battery">
      <svg width="22" height="20" viewBox="0 0 22 20"><g fill="none" stroke="#fff" stroke-width="1.600"><path d="M1 8.500a14 14 0 0 1 20 0"/><path d="M4 11.500a10 10 0 0 1 14 0"/><path d="M7 14.300a6 6 0 0 1 8 0"/></g><circle cx="11" cy="16.500" r="1.800"/></svg>
      <svg width="22" height="20" viewBox="0 0 22 20"><path d="M1.500 7.500H5L10 3v14l-5-4.500H1.500zM13 7.500a4 4 0 0 1 0 5M15.500 5a7 7 0 0 1 0 10M18 3a10 10 0 0 1 0 14" fill="none" stroke="#fff" stroke-width="1.400"/></svg>
      <svg width="22" height="20" viewBox="0 0 22 20"><rect x="1" y="4" width="17" height="12" rx="3" fill="none" stroke="#fff" stroke-width="1.500"/><rect x="3.500" y="6.500" width="4.500" height="7"/><path d="M19.500 8h2v4h-2z"/></svg>
    </button>
    <div class="text-end">04:42 PM<br>01-02-2023</div>
  </div>
</footer>
<script src="https://cdn.jsdelivr.net/npm/bootstrap@5.3.0/dist/js/bootstrap.bundle.min.js"></script>
</body>
</html>
